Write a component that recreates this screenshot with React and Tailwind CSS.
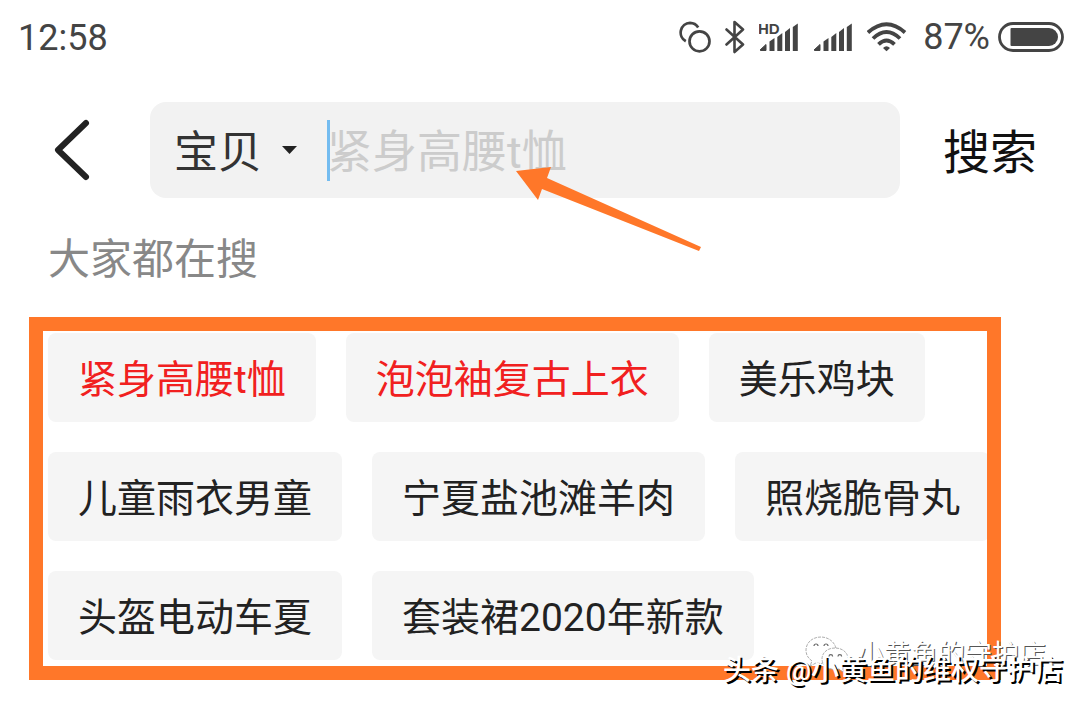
import React, { useState } from "react";

const rows = [
    [
        { text: "紧身高腰t恤", hot: true },
        { text: "泡泡袖复古上衣", hot: true },
        { text: "美乐鸡块" },
    ],
    [
        { text: "儿童雨衣男童" },
        { text: "宁夏盐池滩羊肉" },
        { text: "照烧脆骨丸" },
    ],
    [{ text: "头盔电动车夏" }, { text: "套装裙2020年新款" }],
];

const LinkIcon = () => (
    <svg width="32" height="32" viewBox="0 0 32 32" fill="none" stroke="#444" strokeWidth="2.7">
        <circle cx="20.5" cy="20.3" r="10" />
        <path d="M6.8 20.2 A9.8 9.8 0 0 1 11 1.8 A10 10 0 0 1 19.2 6.4" />
    </svg>
);

const BluetoothIcon = () => (
    <svg
        width="20"
        height="34"
        viewBox="0 0 20 34"
        fill="none"
        stroke="#444"
        strokeWidth="2.6"
        strokeLinecap="round"
        strokeLinejoin="round"
    >
        <path d="M1.5 9.5 L18 24.5 L9.5 32 V2 L18 9.5 L1.5 24.5" />
    </svg>
);

const SignalIcon = ({ hd }) => (
    <svg width="40" height="34" viewBox="0 0 40 34" fill="#444">
        {hd && (
            <text
                x="-1"
                y="14"
                className="font-['Liberation_Sans'] text-[15px] font-bold"
            >
                HD
            </text>
        )}
        <path d="M1 30 L7 24.5 V30.5 H1.5 Z" stroke="#444" strokeLinejoin="round" />
        <path d="M10.5 21.5 L15.5 18 V31 H10.5 Z" />
        <path d="M18.3 17 L23.3 13 V31 H18.3 Z" />
        <path d="M26 12 L31 8 V31 H26 Z" />
        <path d="M33.8 7 L38.8 3.5 V31 H33.8 Z" />
    </svg>
);

const WifiIcon = () => (
    <svg width="40" height="32" viewBox="0 0 40 32" fill="none" stroke="#444" strokeWidth="3.8">
        <path d="M1 11.5 Q19.5 -5 38 11.5" />
        <path d="M6 17.5 Q19.5 4.5 33 17.5" />
        <path d="M11.5 23.3 Q19.5 15.5 27.5 23.3" />
        <path d="M16 27 Q19.5 23.3 23 27 L19.5 30.3 Z" fill="#444" stroke="none" />
    </svg>
);

const BatteryIcon = () => (
    <svg width="66" height="30" viewBox="0 0 66 30" fill="none">
        <rect x="1.5" y="1.5" width="63" height="27" rx="13.5" stroke="#444" strokeWidth="2.8" />
        <path d="M13.5 6 H51 A9 9 0 0 1 51 24 H13.5 Q12.5 24 12.5 23 V7 Q12.5 6 13.5 6 Z" fill="#444" />
    </svg>
);

const WechatIcon = () => (
    <svg
        width="44"
        height="38"
        viewBox="0 0 44 38"
        fill="#fff"
        stroke="#999"
        strokeWidth="0.8"
    >
        <path
            d="M16 1 C7 1 1 7 1 14 C1 19 3 22 7 25 L5 30 L11 27 C20 29 31 24 31 14 C31 7 24 1 16 1 Z"
            strokeDasharray="3 1"
        />
        <path
            d="M30 12 C22 12 17 17 17 23 C17 30 25 35 34 33 L38 36 L38 31 C41 29 43 26 43 23 C43 17 38 12 30 12 Z"
            strokeDasharray="3 1"
        />
        <g fill="none" stroke="#666" strokeWidth="1.2">
            <path d="M9 10 A2 2 0 0 1 13 10" />
            <path d="M19 10 A2 2 0 0 1 23 10" />
            <path d="M24 20.5 A1.8 1.8 0 0 1 27.6 20.5" />
            <path d="M33 20.5 A1.8 1.8 0 0 1 36.6 20.5" />
        </g>
    </svg>
);

const StatusBar = () => (
    <div className="flex h-[74px] items-center justify-between pl-[18px] pr-4 text-[36px] text-[#444]">
        <span className="pt-[2px]">12:58</span>
        <div className="flex items-center">
            <LinkIcon />
            <div className="ml-[14px] flex items-center gap-[14px]">
                <BluetoothIcon />
                <SignalIcon hd />
                <SignalIcon />
                <WifiIcon />
            </div>
            <span className="ml-4 mr-2">87%</span>
            <BatteryIcon />
        </div>
    </div>
);

const SearchHeader = () => {
    const [query, setQuery] = useState("");

    return (
        <form
            className="mt-7 flex items-center pl-[52px] pr-[43px]"
            onSubmit={(e) => e.preventDefault()}
        >
            <button type="button" aria-label="返回">
                <svg
                    width="40"
                    height="64"
                    viewBox="0 0 40 64"
                    fill="none"
                    stroke="#222"
                    strokeWidth="6"
                    strokeLinecap="round"
                    strokeLinejoin="round"
                >
                    <path d="M34 5 L6 32 L34 59" />
                </svg>
            </button>
            <div className="relative ml-[58px] flex h-24 min-w-0 flex-1 items-center rounded-2xl bg-[#f2f2f2] pl-6">
                <div className="relative flex items-center">
                    <select
                        aria-label="搜索类型"
                        className="h-[66px] w-[128px] appearance-none bg-transparent pt-[6px] text-[44px] leading-[60px] text-[#333] outline-none"
                    >
                        <option>宝贝</option>
                    </select>
                    <svg
                        className="pointer-events-none absolute right-1"
                        width="16"
                        height="10"
                        viewBox="0 0 16 10"
                        fill="#222"
                    >
                        <path d="M0 1 H15 L7.5 9 Z" />
                    </svg>
                </div>
                <div className="relative ml-[25px] flex min-w-0 flex-1 items-center">
                    <input
                        type="text"
                        aria-label="搜索"
                        placeholder="紧身高腰t恤"
                        value={query}
                        onChange={(e) => setQuery(e.target.value)}
                        className="h-[66px] w-full bg-transparent pt-[6px] text-[45px] text-[#222] outline-none placeholder:text-[#ccc]"
                    />
                    <span className="absolute left-0 h-[61px] w-[3px] bg-[#74bcf0]" />
                </div>
                {/* arrow pointing at the suggested keyword */}
                <svg
                    className="pointer-events-none absolute left-[366px] top-[65px]"
                    width="186"
                    height="86"
                    viewBox="0 0 186 86"
                    fill="#ff7729"
                >
                    <path d="M0 4 L35 0 L31 11 L185 80 L183 84 L26 22 L22 33 Z" />
                </svg>
            </div>
            <button type="submit" className="ml-[43px] pt-[5px] text-[47px] leading-[60px] text-[#111]">
                搜索
            </button>
        </form>
    );
};

const Watermark = () => (
    <div className="pointer-events-none absolute left-[694px] top-[319px] whitespace-nowrap text-white">
        <div className="absolute left-[82px] top-0 flex items-center gap-2 text-[27px] leading-[38px] text-shadow-[1px_1px_0_#555]">
            <WechatIcon />
            <span>小黄鱼的守护店</span>
        </div>
        <div className="relative mt-4 text-[28px] font-medium leading-[38px] text-shadow-[2px_2px_0_#000]">
            头条 @小黄鱼的维权守护店
        </div>
    </div>
);

export default function App() {
    return (
        <main className="min-h-screen overflow-hidden bg-white font-[Roboto,'Noto_Sans_CJK_SC',sans-serif]">
            <StatusBar />
            <SearchHeader />
            <h2 className="ml-[48px] mt-8 text-[42px] leading-[60px] text-[#888]">
                大家都在搜
            </h2>
            <section className="relative ml-[29px] mr-[79px] mt-[27px]">
                <div className="flex flex-col gap-[30px] overflow-hidden border-[14px] border-[#ff7729] pb-[6px] pl-[5px] pt-[2px]">
                    {rows.map((row, i) => (
                        <div key={i} className="flex gap-[30px]">
                            {row.map(({ text, hot }) => (
                                <button
                                    key={text}
                                    className={`h-[89px] shrink-0 whitespace-nowrap rounded-lg bg-[#f5f5f5] px-[30px] pt-[6px] text-[39px] ${
                                        hot ? "text-[#f12020]" : "text-[#222]"
                                    }`}
                                >
                                    {text}
                                </button>
                            ))}
                        </div>
                    ))}
                </div>
                <Watermark />
            </section>
        </main>
    );
}
